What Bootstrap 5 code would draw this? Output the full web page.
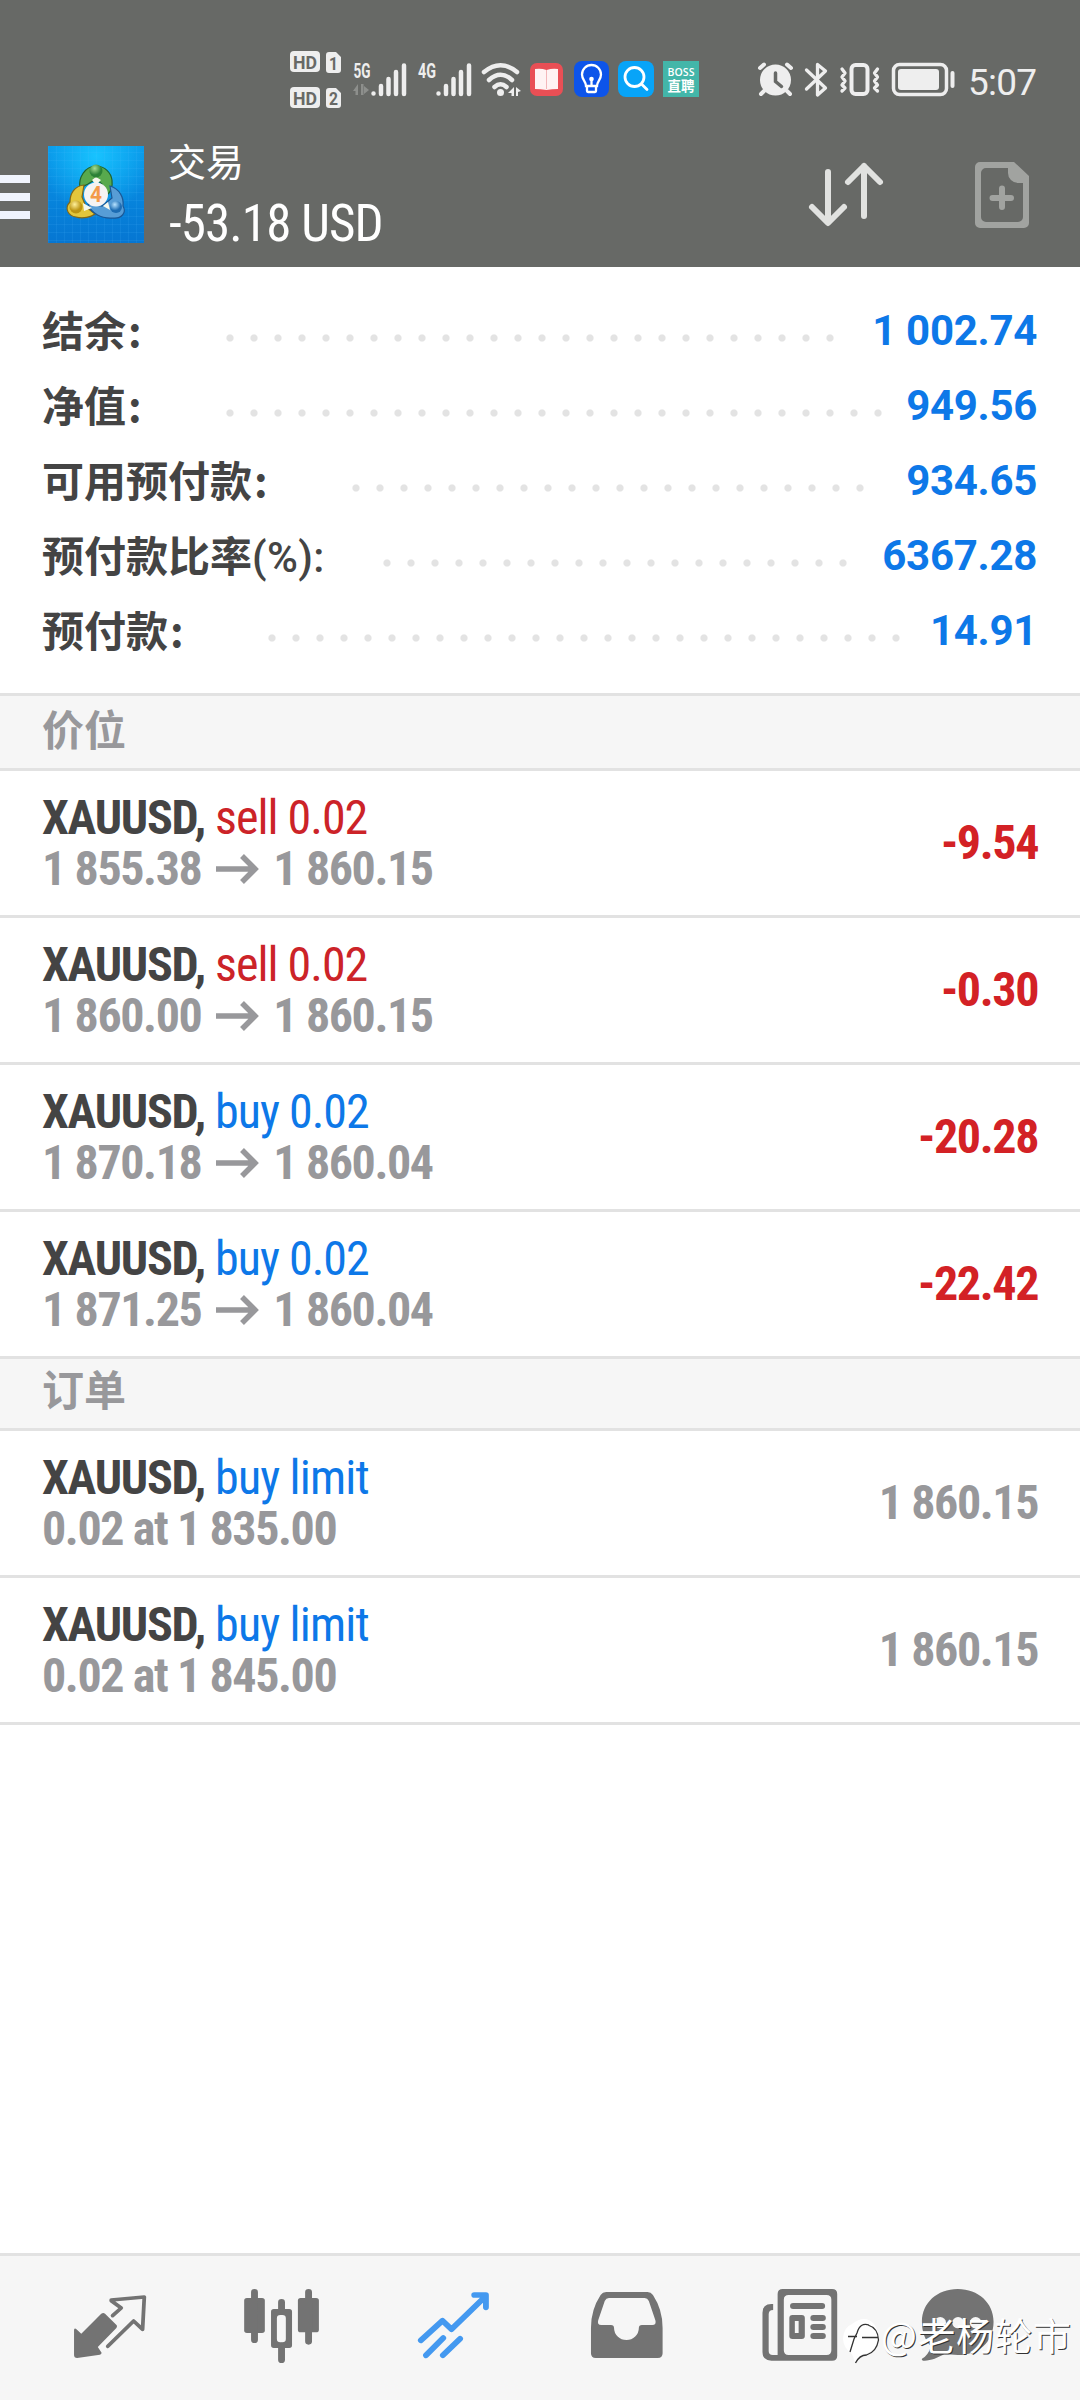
<!DOCTYPE html>
<html lang="zh-CN">
<head>
<meta charset="utf-8">
<meta name="viewport" content="width=device-width, initial-scale=1">
<title>交易</title>
<link rel="stylesheet" href="https://cdn.jsdelivr.net/npm/bootstrap@5.3.0/dist/css/bootstrap.min.css">
<script src="https://cdn.jsdelivr.net/npm/bootstrap@5.3.0/dist/js/bootstrap.bundle.min.js"></script>
<style>
body{font-family:Roboto,"Noto Sans CJK SC",sans-serif;color:#444;background:#fff;overflow:hidden}
.screen{width:1080px;height:2400px}
svg{display:block;flex:none}
.topbar{background:#676966;height:267px}
.statusline{height:120px;padding-left:280px}
.titlebar{height:147px}
.page-name{font:400 38px/44px "Noto Sans CJK SC",sans-serif;padding-top:18px;margin-left:-1px}
.cond{font-family:Roboto,sans-serif;font-stretch:75%;white-space:pre}
.page-sum{font-size:51px;line-height:60px;padding-top:12px;letter-spacing:-.9px}
.summary{height:426px;padding:26px 43px 0 42px}
.sumrow{height:75px;font-size:42px;font-weight:700;line-height:75px}
.sumlabel{width:var(--w);font-family:"Noto Sans CJK SC",sans-serif;white-space:nowrap;line-height:71px}
.sumlabel .pct{font-family:Roboto,sans-serif;font-weight:500;letter-spacing:.4px}
.colon{margin-left:2px}
.dots{width:calc(var(--n)*24px);height:24px;margin-top:33px;background:radial-gradient(circle at 50% 50%,#e3e3e3 3px,transparent 4.2px) 0 0/24px 24px repeat-x}
.sumvalue{color:#0d78e8;letter-spacing:-.3px}
.sect{background:#f6f6f6;color:#98989b;font:700 42px/64px "Noto Sans CJK SC",sans-serif;padding-left:42px;border-bottom:3px solid #e2e2e2}
.sect-a{height:78px;border-top:3px solid #e2e2e2}
.sect-b{height:72px;line-height:58px}
.deal{height:147px;padding:0 43px 0 42px;border-bottom:3px solid #e2e2e2;font-size:48px;line-height:51px;letter-spacing:-1px}
.sym{font-weight:700;letter-spacing:-1.25px}
.sell{color:#cc2328}
.buy{color:#0d78e8}
.buy.limit{letter-spacing:-.85px}
.sub{color:#98989b;font-weight:700;letter-spacing:-1.4px}
.arrow{margin:0 14px 0 15px}
.result{font-weight:700;padding-bottom:2px;letter-spacing:-1.4px;margin-right:-1px}
.result.sell{color:#d32125}
.tabs{height:147px;background:#f6f6f6;border-top:3px solid #e2e2e2}
.wmark{right:0;bottom:0}
</style>
</head>
<body>
<div class="screen d-flex flex-column position-relative">
<header class="topbar text-white">
<div class="statusline d-flex">
<svg width="245" height="120" viewBox="280 0 245 120" fill="#eee">
<g font-family="Roboto" font-weight="700">
<rect x="290" y="51" width="30" height="21" rx="4"/><rect x="290" y="87" width="30" height="21" rx="4"/>
<path d="M329 52h7l5 5v13a3 3 0 0 1-3 3h-9a3 3 0 0 1-3-3V55a3 3 0 0 1 3-3zM329 88h7l5 5v12a3 3 0 0 1-3 3h-9a3 3 0 0 1-3-3V91a3 3 0 0 1 3-3z"/>
<g fill="#676966" font-size="19"><text x="293" y="68.500" textLength="24" lengthAdjust="spacingAndGlyphs">HD</text><text x="293" y="104.500" textLength="24" lengthAdjust="spacingAndGlyphs">HD</text><text x="329" y="69.500" font-size="18" textLength="9" lengthAdjust="spacingAndGlyphs">1</text><text x="329" y="105" font-size="18" textLength="9" lengthAdjust="spacingAndGlyphs">2</text></g>
<text x="353.500" y="78" font-size="20" textLength="17" lengthAdjust="spacingAndGlyphs">5G</text><text x="418" y="78" font-size="20" textLength="18" lengthAdjust="spacingAndGlyphs">4G</text>
</g>
<path d="M353 91l5-7v11h-2.500v-4zM361 84h2.500v11H361zM364 86l5 4-5 4z" fill="#8d8f8c"/>
<g stroke="#eee" stroke-width="4.500" stroke-linecap="round"><path d="M373.500 93.500v0M381 94V86M388.500 94V79M396 94V72M404 94V65.500M438.500 93.500v0M446 94V86M453.500 94V79M461 94V72M469 94V65.500"/></g>
<g fill="none" stroke="#eee" stroke-width="4.500" stroke-linecap="round"><path d="M484 72Q500.500 58.500 517 72M489 80Q500.500 69.500 512 80M494.500 87Q500.500 81.500 506.500 87"/></g>
<circle cx="500.500" cy="92.500" r="3.500"/><path d="M508 93l6-6v9h-2.500v-3zM516 87l5 4-3 1v4h-2z"/>
</svg>
<svg width="195" height="120" viewBox="525 0 195 120">
<rect x="530" y="63" width="33" height="33" rx="7" fill="#e94f55"/><path d="M535 69q6-1 11.500 1 6-2 11.500-1v20q-6 0-11.500 1-6-1-11.500-1z" fill="#fff3f3"/><path d="M546.500 70v19" stroke="#f3b7ba" stroke-width="1"/>
<rect x="574" y="61" width="35" height="36" rx="8" fill="#0d54ea"/><g fill="none" stroke="#fff" stroke-width="2.300"><path d="M586 86c0-5-4-6-4-11.500a9.500 9.500 0 0 1 19 0c0 5.500-4 6.500-4 11.500zM587 86v5q0 1 1 1h7q1 0 1-1v-5M591.500 80v6"/></g><circle cx="591.500" cy="79" r="2.300" fill="#fff"/>
<rect x="618" y="61" width="36" height="36" rx="8" fill="#08a4f8"/><circle cx="634.500" cy="77" r="9.500" fill="none" stroke="#fff" stroke-width="2.800"/><path d="M641.500 84l5.500 5.500" stroke="#fff" stroke-width="2.800" stroke-linecap="round"/>
<rect x="663" y="61" width="36" height="36" fill="#43b6a9"/><g fill="#fff" font-weight="700" text-anchor="middle"><text x="681" y="75.500" font-size="10.500" font-family="Open Sans" font-weight="600" textLength="27">BOSS</text><text x="681" y="91" font-size="13.500" font-family="Noto Sans CJK SC">直聘</text></g>
</svg>
<svg width="360" height="120" viewBox="720 0 360 120" fill="#eee">
<circle cx="775.500" cy="80" r="15.500"/><g stroke="#eee" stroke-width="4" stroke-linecap="round" fill="none"><path d="M760 68l4-3.500M791 68l-4-3.500M764 91l-3 3M787 91l3 3"/></g><path d="M775.500 73v8.500l6 5" fill="none" stroke="#676966" stroke-width="3.500" stroke-linecap="round"/>
<path d="M806.500 70l19 18-8 7V64.500l8 6.500-19 18" fill="none" stroke="#eee" stroke-width="3.300" stroke-linejoin="round" stroke-linecap="round"/>
<rect x="851.500" y="65" width="16" height="29" rx="4" fill="none" stroke="#eee" stroke-width="4"/><path d="M842 69l3 4-3 4 3 4-3 4 3 3-3 3M877.500 69l-3 4 3 4-3 4 3 4-3 3 3 3" fill="none" stroke="#eee" stroke-width="3.300" stroke-linecap="round" stroke-linejoin="round"/>
<rect x="893.500" y="64.500" width="53" height="30" rx="6" fill="none" stroke="#eee" stroke-width="3.500"/><rect x="898" y="69" width="41" height="21" rx="3"/><rect x="950.500" y="71" width="4" height="17" rx="2"/>
<text x="968" y="95" font-family="Roboto" font-size="37" textLength="69" lengthAdjust="spacing">5:07</text>
</svg>
</div>
<div class="titlebar d-flex">
<svg width="169" height="147" viewBox="0 120 169 147">
<defs><linearGradient id="bg" x2="0" y2="1"><stop stop-color="#0895e8"/><stop offset="1" stop-color="#0676d2"/></linearGradient>
<radialGradient id="gl" cx=".5" cy=".1" r=".6"><stop stop-color="#18c3ff"/><stop offset="1" stop-color="#18c3ff" stop-opacity="0"/></radialGradient>
<pattern id="gr" width="8" height="8" patternUnits="userSpaceOnUse"><path d="M0 0H8M0 0V8" stroke="#5cc0ff" stroke-opacity=".22" fill="none"/></pattern>
<radialGradient id="g1" cx=".4" cy=".3"><stop stop-color="#a9dd92"/><stop offset="1" stop-color="#2c8136"/></radialGradient>
<radialGradient id="g2" cx=".4" cy=".3"><stop stop-color="#fff09a"/><stop offset="1" stop-color="#bc9412"/></radialGradient>
<radialGradient id="g3" cx=".4" cy=".3"><stop stop-color="#b7e3ff"/><stop offset="1" stop-color="#1c6cb3"/></radialGradient></defs>
<path d="M0 175h30v8H0zM0 193h30v8H0zM0 211h30v8H0z" fill="#f0f4fd"/>
<g><rect x="48" y="146" width="96" height="97" fill="url(#bg)"/><rect x="48" y="146" width="96" height="97" fill="url(#gl)"/><rect x="48" y="146" width="96" height="97" fill="url(#gr)"/></g>
<g stroke-width="1.200">
<path d="M96 166c9 0 15 7 16 14 1 8-2 13-6 16l-4-12-6-5-8 5-8 4c-2-10 5-22 16-22z" fill="#58a94d" stroke="#1f622d"/>
<path d="M84 185c-10 1-14 9-14 17-6 6-2 14 6 15 7 2 15 0 19-3l-9-7-4-10z" fill="#e2c63c" stroke="#806718"/>
<path d="M110 186c10 3 14 12 13 20 4 7-2 13-10 12-12 1-22-5-25-14l14 2 10-8z" fill="#579dd6" stroke="#1b5896"/>
<path d="M83 203l9 5-8 3zM108 202l2 8-7-4zM92 180l4-3 5 3-5 5z" fill="#f6f8ed"/>
<circle cx="96" cy="171" r="6.500" fill="url(#g1)"/><circle cx="76" cy="207" r="6.500" fill="url(#g2)"/><circle cx="116" cy="207" r="6" fill="url(#g3)"/></g>
<circle cx="96" cy="194.500" r="12" fill="#f5f3f3"/><text x="96" y="202" text-anchor="middle" font-family="Roboto" font-weight="700" font-size="22" fill="#f39a4a" textLength="12" lengthAdjust="spacingAndGlyphs">4</text>
</svg>
<div class="flex-grow-1">
<div class="page-name">交易</div>
<div class="page-sum cond">-53.18 USD</div>
</div>
<svg width="300" height="147" viewBox="780 120 300 147">
<path d="M828 172v50M812 207l16 16 16-16M864 216v-50M848 182l16-16 16 16" fill="none" stroke="#e1e2e0" stroke-width="6" stroke-linecap="round" stroke-linejoin="round"/>
<path fill-rule="evenodd" fill="#a1a3a0" d="M980 162h34l15 14v47a5 5 0 0 1-5 5h-44a5 5 0 0 1-5-5v-56a5 5 0 0 1 5-5zM986 168a5 5 0 0 0-5 5v44a5 5 0 0 0 5 5h32a5 5 0 0 0 5-5v-34h-5a10 10 0 0 1-10-10v-5z"/>
<path d="M1002 188.500v18.500M992.500 198h18.500" stroke="#a1a3a0" stroke-width="6" stroke-linecap="round"/>
</svg>
</div>
</header>
<section class="summary">
<div class="sumrow d-flex"><div class="sumlabel" style="--w:176px">结余<span class="colon">:</span></div><div class="dots" style="--n:26"></div><div class="sumvalue ms-auto">1 002.74</div></div>
<div class="sumrow d-flex"><div class="sumlabel" style="--w:176px">净值<span class="colon">:</span></div><div class="dots" style="--n:28"></div><div class="sumvalue ms-auto">949.56</div></div>
<div class="sumrow d-flex"><div class="sumlabel" style="--w:302px">可用预付款<span class="colon">:</span></div><div class="dots" style="--n:22"></div><div class="sumvalue ms-auto">934.65</div></div>
<div class="sumrow d-flex"><div class="sumlabel" style="--w:333px">预付款比率<span class="pct">(%):</span></div><div class="dots" style="--n:20"></div><div class="sumvalue ms-auto">6367.28</div></div>
<div class="sumrow d-flex"><div class="sumlabel" style="--w:218px">预付款<span class="colon">:</span></div><div class="dots" style="--n:27"></div><div class="sumvalue ms-auto">14.91</div></div>
</section>
<svg width="0" height="0" class="position-absolute"><symbol id="arr" viewBox="0 0 43 30"><path d="M0 15h39M26 2l13 13-13 13" fill="none" stroke="#98989b" stroke-width="5.500"/></symbol></svg>
<div class="sect sect-a">价位</div>
<div class="deal d-flex justify-content-between align-items-center cond"><div><div><span class="sym">XAUUSD,</span> <span class="sell">sell 0.02</span></div><div class="sub d-flex align-items-center"><span>1 855.38</span><svg width="43" height="30" class="arrow"><use href="#arr"/></svg><span>1 860.15</span></div></div><div class="result sell">-9.54</div></div>
<div class="deal d-flex justify-content-between align-items-center cond"><div><div><span class="sym">XAUUSD,</span> <span class="sell">sell 0.02</span></div><div class="sub d-flex align-items-center"><span>1 860.00</span><svg width="43" height="30" class="arrow"><use href="#arr"/></svg><span>1 860.15</span></div></div><div class="result sell">-0.30</div></div>
<div class="deal d-flex justify-content-between align-items-center cond"><div><div><span class="sym">XAUUSD,</span> <span class="buy">buy 0.02</span></div><div class="sub d-flex align-items-center"><span>1 870.18</span><svg width="43" height="30" class="arrow"><use href="#arr"/></svg><span>1 860.04</span></div></div><div class="result sell">-20.28</div></div>
<div class="deal d-flex justify-content-between align-items-center cond"><div><div><span class="sym">XAUUSD,</span> <span class="buy">buy 0.02</span></div><div class="sub d-flex align-items-center"><span>1 871.25</span><svg width="43" height="30" class="arrow"><use href="#arr"/></svg><span>1 860.04</span></div></div><div class="result sell">-22.42</div></div>
<div class="sect sect-b">订单</div>
<div class="deal d-flex justify-content-between align-items-center cond"><div><div><span class="sym">XAUUSD,</span> <span class="buy limit">buy limit</span></div><div class="sub">0.02 at 1 835.00</div></div><div class="result sub">1 860.15</div></div>
<div class="deal d-flex justify-content-between align-items-center cond"><div><div><span class="sym">XAUUSD,</span> <span class="buy limit">buy limit</span></div><div class="sub">0.02 at 1 845.00</div></div><div class="result sub">1 860.15</div></div>
<nav class="tabs d-flex mt-auto">
<svg width="180" height="144" viewBox="0 48 522.670 432" preserveAspectRatio="none" fill="#737373"><path d="M294 221q6-4 11 0l34 35q2 4-1 8l-54 57 11 17q0 5-5 6l-66 10q-9 0-9-9v-76q2-6 7-1l14 13z"/><path d="M327 227l25-23-29-22v-2l96-9-5 97-26-25-75 76" fill="none" stroke="#737373" stroke-width="11" stroke-linecap="round" stroke-linejoin="round"/></svg>
<svg width="180" height="144" viewBox="522.670 48 522.670 432" preserveAspectRatio="none" fill="#737373"><rect x="709" y="174" width="60" height="105" rx="8"/><rect x="865" y="174" width="61" height="103" rx="8"/><path d="M739 157v142M896 157v147M817.500 187v25M817.500 318v41" stroke="#737373" stroke-width="20" stroke-linecap="round"/><path fill-rule="evenodd" d="M795 207h45q8 0 8 8v101q0 8-8 8h-45q-8 0-8-8V215q0-8 8-8zM814 225q-10 0-10 10v62q0 10 10 10h6q10 0 10-10v-62q0-10-10-10z"/></svg>
<svg width="180" height="144" viewBox="1045.330 48 522.670 432" preserveAspectRatio="none"><g fill="none" stroke="#4499f0" stroke-width="17" stroke-linecap="round" stroke-linejoin="round"><path d="M1222 301l63-59 26 26 96-96M1377 165h34v37M1237 346l50-52M1286 346l50-50"/></g></svg>
<svg width="180" height="144" viewBox="0 48 522.670 432" preserveAspectRatio="none" fill="#737373"><path fill-rule="evenodd" d="M192 156h120q10 0 16 9 28 44 28 98v77q0 14-14 14H162q-14 0-14-14v-77q0-54 28-98 6-9 16-9zM200 174q-8 0-12 9l-19 58q-4 14 9 14h28q9 0 9 9a36 36 0 0 0 72 0q0-9 9-9h30q13 0 9-14l-19-58q-4-9-12-9z"/></svg>
<svg width="180" height="144" viewBox="522.670 48 522.670 432" preserveAspectRatio="none" fill="#737373"><path fill-rule="evenodd" d="M705 147h143q15 0 15 15v185q0 15-15 15H672q-26 0-26-26V218q0-26 26-26h5v18q-13 0-13 13v110q0 12 12 12h14V162q0-15 15-15zM722 165q-14 0-14 14v152q0 14 14 14h110q14 0 14-14V179q0-14-14-14zM733 225h27q9 0 9 9v54q0 9-9 9h-27q-9 0-9-9v-54q0-9 9-9zM740 243v36h11v-36z"/><path d="M735 198h84M794 234h27M794 261h27M794 288h27" stroke="#737373" stroke-width="18" stroke-linecap="round"/></svg>
<svg width="180" height="144" viewBox="1045.330 48 522.670 432" preserveAspectRatio="none" fill="#737373"><path d="M1213 147c60 0 104 42 104 98 0 62-45 100-104 100-14 0-25-2-36-5-21 14-42 22-60 22q-10 0-8-6 18-8 26-37c-16-18-26-42-26-74 0-56 44-98 104-98z"/><g fill="#f6f6f6"><circle cx="1162" cy="248" r="17"/><circle cx="1214" cy="248" r="17"/><circle cx="1265" cy="248" r="17"/></g></svg>
</nav>
<svg class="wmark position-absolute" width="240" height="110" viewBox="840 2290 240 110"><path d="M843 2338q1-11 9-14 13-10 22 0 5 6 4 16-3 13-15 14l-8 8-3-8q-9-6-9-16z" fill="#fff"/><path d="M869 2325q-9-3-12 8l-3 6-4 13M848 2336.500h9M862 2337.500h16M868 2325q10 3 10.500 15-2 12-12 15-7 0-11 8" fill="none" stroke="#333" stroke-width="1.300"/>
<g font-family="Noto Sans CJK SC" font-size="38"><text x="882" y="2351" fill="#333" textLength="190">@老杨轮市</text><text x="881" y="2350" fill="#fff" textLength="190">@老杨轮市</text></g></svg>
</div>
</body>
</html>
